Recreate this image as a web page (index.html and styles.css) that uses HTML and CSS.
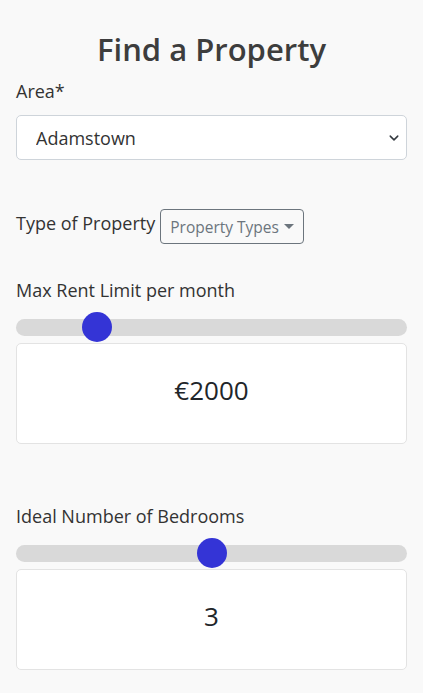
FILE: index.html
```html
<!DOCTYPE html>
<html lang="en">
<head>
<meta charset="utf-8">
<title>Find a Property</title>
<link rel="stylesheet" href="styles.css">
</head>
<body>
<main class="page">
  <h1 class="title">Find a Property</h1>

  <label class="label label-area" for="area">Area*</label>
  <div class="select-wrap">
    <select id="area" class="select">
      <option>Adamstown</option>
    </select>
    <svg class="chevron" width="14" height="10" viewBox="0 0 16 16" aria-hidden="true"><path d="M2 5l6 6 6-6" fill="none" stroke="#343a40" stroke-width="2.4" stroke-linecap="round" stroke-linejoin="round"/></svg>
  </div>

  <div class="type-row">
    <span class="label type-label">Type of Property</span>
    <button class="dropdown" type="button">Property Types<span class="caret"></span></button>
  </div>

  <section class="slider-block rent">
    <label class="label" for="rent">Max Rent Limit per month</label>
    <input id="rent" class="range" type="range" min="1000" max="6500" step="100" value="2000">
    <div class="value-card">€2000</div>
  </section>

  <section class="slider-block beds">
    <label class="label" for="beds">Ideal Number of Bedrooms</label>
    <input id="beds" class="range" type="range" min="1" max="5" step="1" value="3">
    <div class="value-card">3</div>
  </section>
</main>
</body>
</html>
```

FILE: styles.css
```css
* { box-sizing: border-box; }

html, body {
  margin: 0;
  background: #f9f9f9;
}

body {
  font-family: "Open Sans", "Noto Sans", sans-serif;
  font-size: 18px;
  color: #212529;
}

.page {
  padding: 0 16px;
  display: flex;
  flex-direction: column;
}

.title {
  margin: 27px 0 0;
  text-align: center;
  font-size: 31px;
  font-weight: 600;
  line-height: 44px;
  color: #3d3d3d;
}

.label {
  display: block;
  font-size: 18px;
  line-height: 27px;
  color: #333;
}

.label-area {
  margin-top: 7px;
}

.select-wrap {
  position: relative;
  margin-top: 10px;
}

.select {
  display: block;
  width: 100%;
  height: 45px;
  padding: 0 40px 0 19px;
  font-family: inherit;
  font-size: 18px;
  color: #333;
  background: #fff;
  border: 1px solid #ced4da;
  border-radius: 5px;
  -webkit-appearance: none;
  appearance: none;
}

.chevron {
  position: absolute;
  right: 6px;
  top: 18px;
  pointer-events: none;
}

.type-row {
  display: flex;
  align-items: flex-start;
  gap: 5px;
  margin-top: 49px;
}

.type-label {
  padding-top: 1px;
}

.dropdown {
  display: inline-flex;
  align-items: center;
  height: 35px;
  padding: 0 9px;
  font-family: inherit;
  font-size: 15.5px;
  color: #6c757d;
  background: transparent;
  border: 1px solid #6c757d;
  border-radius: 4px;
}

.caret {
  display: inline-block;
  margin-left: 5px;
  border-top: 5px solid #6c757d;
  border-left: 5px solid transparent;
  border-right: 5px solid transparent;
}

.slider-block {
  display: flex;
  flex-direction: column;
}

.rent { margin-top: 32.5px; }
.beds { margin-top: 58.5px; }

.range {
  -webkit-appearance: none;
  appearance: none;
  width: 100%;
  height: 30px;
  margin: 8.5px 0 0;
  background: transparent;
}

.range::-webkit-slider-runnable-track {
  height: 17px;
  background: #d9d9d9;
  border-radius: 9px;
}

.range::-webkit-slider-thumb {
  -webkit-appearance: none;
  appearance: none;
  width: 30px;
  height: 30px;
  margin-top: -6.5px;
  border-radius: 50%;
  background: #3434d6;
  border: none;
}

.value-card {
  margin-top: 1px;
  height: 101px;
  padding-bottom: 8px;
  display: flex;
  align-items: center;
  justify-content: center;
  background: #fff;
  border: 1px solid #e3e3e3;
  border-radius: 5px;
  font-size: 26px;
  color: #212529;
}
```
